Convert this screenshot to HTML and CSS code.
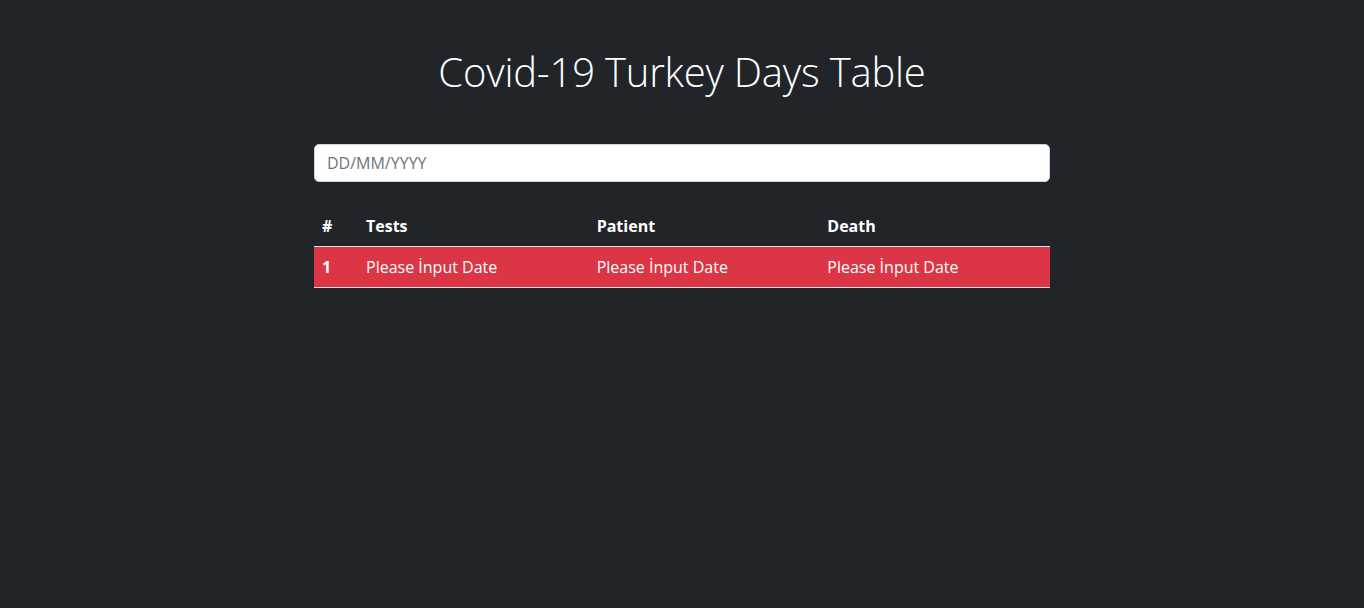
FILE: index.html
```html
<!DOCTYPE html>
<html lang="en">
<head>
<meta charset="utf-8">
<title>Covid-19 Turkey Days Table</title>
<link rel="stylesheet" href="styles.css">
</head>
<body>
<main class="page">
  <h1 class="title">Covid-19 Turkey Days Table</h1>
  <input class="date-input" type="text" placeholder="DD/MM/YYYY">
  <table class="days-table">
    <thead>
      <tr>
        <th class="col-num">#</th>
        <th>Tests</th>
        <th>Patient</th>
        <th>Death</th>
      </tr>
    </thead>
    <tbody>
      <tr class="row-danger">
        <th class="col-num">1</th>
        <td>Please İnput Date</td>
        <td>Please İnput Date</td>
        <td>Please İnput Date</td>
      </tr>
    </tbody>
  </table>
</main>
</body>
</html>
```
FILE: styles.css
```css
* { box-sizing: border-box; }
html, body { margin: 0; padding: 0; }
body {
  background: #212529;
  color: #fff;
  font-family: "Open Sans", "Noto Sans", sans-serif;
  font-size: 16px;
  line-height: 1.5;
  min-height: 608px;
}
.page {
  width: 736px;
  margin: 0 auto;
  padding-top: 48px;
  display: flex;
  flex-direction: column;
}
.title {
  margin: 0 0 48px;
  text-align: center;
  font-size: 40px;
  font-weight: 300;
  line-height: 1.2;
  letter-spacing: -0.2px;
}
.date-input {
  display: block;
  width: 100%;
  height: 38px;
  padding: 6px 12px;
  font: inherit;
  font-size: 16px;
  color: #212529;
  background: #fff;
  border: 1px solid #ced4da;
  border-radius: 5px;
  margin: 0 0 24px;
  outline: none;
}
.date-input::placeholder { color: #6c757d; }
.days-table {
  width: 100%;
  border-collapse: collapse;
  table-layout: fixed;
  color: #fff;
}
.days-table th, .days-table td {
  padding: 8px;
  text-align: left;
  vertical-align: top;
  font-weight: 400;
}
.days-table thead th { font-weight: 700; }
.days-table tbody th { font-weight: 700; }
.col-num { width: 44px; }
.days-table thead tr { border-bottom: 1px solid #dee2e6; }
.row-danger { background: #dc3545; border-bottom: 1px solid #dee2e6; }
```
